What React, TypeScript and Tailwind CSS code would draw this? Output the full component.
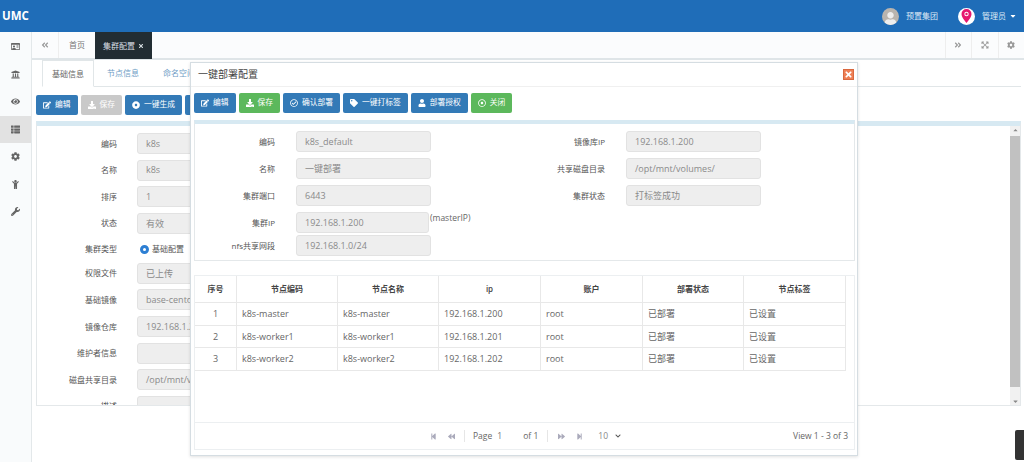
import { FaAngleDoubleLeft, FaAngleDoubleRight, FaBackward, FaCaretDown, FaCheckCircle, FaChevronDown, FaChild, FaCog, FaDotCircle, FaDownload, FaEdit, FaExpandArrowsAlt, FaEye, FaForward, FaRegCheckCircle, FaRegDotCircle, FaRegIdCard, FaStepBackward, FaStepForward, FaThList, FaTimes, FaUniversity, FaUser, FaWrench, FaTag } from 'react-icons/fa'

const font = 'font-["Open_Sans","Noto_Sans_CJK_SC",sans-serif]'

const sideIcons = [FaRegIdCard, FaUniversity, FaEye, FaThList, FaCog, FaChild, FaWrench]

const bgFields: [string, string][] = [
  ['编码', 'k8s'],
  ['名称', 'k8s'],
  ['排序', '1'],
  ['状态', '有效'],
]
const bgFields2: [string, string][] = [
  ['权限文件', '已上传'],
  ['基础镜像', 'base-centos'],
  ['镜像仓库', '192.168.1.200'],
  ['维护者信息', ''],
  ['磁盘共享目录', '/opt/mnt/volumes/'],
  ['描述', ''],
]

const leftFields: [string, string][] = [
  ['编码', 'k8s_default'],
  ['名称', '一键部署'],
  ['集群端口', '6443'],
]
const rightFields: [string, string][] = [
  ['镜像库IP', '192.168.1.200'],
  ['共享磁盘目录', '/opt/mnt/volumes/'],
  ['集群状态', '打标签成功'],
]

const cols = ['序号', '节点编码', '节点名称', 'ip', '账户', '部署状态', '节点标签']
const rows = [
  ['1', 'k8s-master', 'k8s-master', '192.168.1.200', 'root', '已部署', '已设置'],
  ['2', 'k8s-worker1', 'k8s-worker1', '192.168.1.201', 'root', '已部署', '已设置'],
  ['3', 'k8s-worker2', 'k8s-worker2', '192.168.1.202', 'root', '已部署', '已设置'],
]
const colWidths = ['w-[42px]', 'w-[101px]', 'w-[101px]', 'w-[102px]', 'w-[102px]', 'w-[101px]', 'w-[102px]']

function Btn({ icon: Icon, label, color = 'bg-[#337ab7]' }: { icon: any; label: string; color?: string }) {
  return (
    <div className={`${color} h-[20px] px-[7px] rounded-[2px] flex items-center gap-[4px] text-white text-[7.75px] shrink-0`}>
      <Icon className="text-[8px]" />
      <span>{label}</span>
    </div>
  )
}

function Input({ value, w = 'w-[135px]' }: { value: string; w?: string }) {
  return (
    <div className={`${w} h-[21px] bg-[#eeeeee] border border-[#e2e2e2] rounded-[3px] px-[8px] flex items-center text-[9px] text-[#8a8a8a] shrink-0`}>
      {value}
    </div>
  )
}

function BgRow({ label, value }: { label: string; value: string }) {
  return (
    <div className="flex items-center h-[21px] mb-[5.6px] shrink-0">
      <div className="w-[80px] text-right text-[8px] text-[#555]">{label}</div>
      <div className="ml-[20px]"><Input value={value} w="w-[300px]" /></div>
    </div>
  )
}

function ModalField({ label, value, w, labelW = 'w-[80px]' }: { label: string; value: string; w?: string; labelW?: string }) {
  return (
    <div className="flex items-center h-[21px]">
      <div className={`${labelW} text-right text-[8px] text-[#555] shrink-0`}>{label}</div>
      <div className="ml-[21px]"><Input value={value} w={w} /></div>
    </div>
  )
}

function Modal() {
  return (
    <div className="absolute left-[190px] top-[62px] w-[668px] h-[394px] bg-white border border-[#d5dde2] shadow-[0_1px_3px_rgba(0,0,0,0.12)] flex flex-col">
      <div className="h-[24px] flex items-center justify-between pl-[7px] pr-[3px] border-b border-[#f0f0f0] shrink-0">
        <span className="text-[10px] text-[#444]">一键部署配置</span>
        <div className="w-[11px] h-[11px] bg-[#ee7f55] border border-[#d9683f] flex items-center justify-center">
          <FaTimes className="text-white text-[9px]" />
        </div>
      </div>
      <div className="flex gap-[3px] pl-[3px] pt-[6px] shrink-0">
        <Btn icon={FaEdit} label="编辑" />
        <Btn icon={FaDownload} label="保存" color="bg-[#5cb85c]" />
        <Btn icon={FaRegCheckCircle} label="确认部署" />
        <Btn icon={FaTag} label="一键打标签" />
        <Btn icon={FaUser} label="部署授权" />
        <Btn icon={FaRegDotCircle} label="关闭" color="bg-[#5cb85c]" />
      </div>
      <div className="ml-[3px] mr-[2px] mt-[7px] h-[141px] border border-[#e4e8ea] border-t-[4px] border-t-[#d7e9f2] flex pt-[7px] shrink-0">
        <div className="w-[236px] flex flex-col shrink-0">
          <div className="flex flex-col gap-[6px]">
            {leftFields.map(([l, v]) => <ModalField key={l} label={l} value={v} />)}
            <div className="flex items-start h-[21px] whitespace-nowrap">
              <ModalField label="集群IP" value="192.168.1.200" w="w-[133px]" />
              <span className="text-[8.5px] text-[#666] ml-[1px]">(masterIP)</span>
            </div>
          </div>
          <div className="mt-[2px]">
            <ModalField label="nfs共享网段" value="192.168.1.0/24" />
          </div>
        </div>
        <div className="flex flex-col gap-[6px] ml-[74px]">
          {rightFields.map(([l, v]) => <ModalField key={l} label={l} value={v} labelW="w-[100px]" />)}
        </div>
      </div>
      <div className="ml-[3px] mr-[2px] mt-[14px] flex-1 border border-[#eceff1] mb-[5px] flex flex-col">
        <div className="w-[651px]">
          <div className="flex h-[27px] border-b border-[#e8e8e8]">
            {cols.map((c, i) => (
              <div key={c} className={`${colWidths[i]} border-r border-[#e8e8e8] flex items-center justify-center text-[8px] font-semibold text-[#444]`}>{c}</div>
            ))}
          </div>
          {rows.map(r => (
            <div key={r[0]} className="flex h-[22.5px] border-b border-[#e8e8e8]">
              {r.map((c, i) => (
                <div key={i} className={`${colWidths[i]} ${i === 0 ? 'justify-center' : 'pl-[5px]'} border-r border-[#e8e8e8] flex items-center text-[9px] text-[#666]`}>{c}</div>
              ))}
            </div>
          ))}
        </div>
        <div className="flex-1" />
        <div className="h-[27px] border-t border-[#eceff1] flex items-center relative text-[#888] text-[8.5px]">
          <div className="ml-[235px] flex items-center">
            <FaStepBackward className="text-[7px] text-[#aab]" />
            <FaBackward className="text-[7px] text-[#aab] ml-[11px]" />
            <span className="w-px h-[12px] bg-[#e6e6e6] ml-[9px]" />
            <span className="ml-[8px] text-[#666]">Page</span>
            <span className="ml-[5px] w-[24px] text-[#777]">1</span>
            <span className="ml-[2px] text-[#666]">of 1</span>
            <span className="w-px h-[12px] bg-[#e6e6e6] ml-[9px]" />
            <FaForward className="text-[7px] text-[#aab] ml-[10px]" />
            <FaStepForward className="text-[7px] text-[#aab] ml-[11px]" />
            <span className="ml-[15px]">10</span>
            <FaChevronDown className="text-[6px] ml-[7px] text-[#555]" />
          </div>
          <span className="absolute right-[6px] text-[#666]">View 1 - 3 of 3</span>
        </div>
      </div>
    </div>
  )
}

export default function App() {
  return (
    <div className={`${font} relative w-[1024px] h-[462px] overflow-hidden bg-white flex flex-col`}>
      <header className="h-[32px] bg-[#1f6db8] flex items-center justify-between text-white shrink-0">
        <span className="ml-[2px] text-[11.5px] font-bold">UMC</span>
        <div className="flex items-center mr-[7px]">
          <div className="w-[17px] h-[17px] rounded-full bg-[#b9b4ae] flex items-end justify-center overflow-hidden">
            <FaUser className="text-[13px] text-[#eeeeee]" />
          </div>
          <span className="ml-[7px] text-[8px] text-[#dce9f5]">预置集团</span>
          <div className="ml-[20px] w-[17px] h-[17px] rounded-full bg-white flex items-center justify-center">
            <svg width="11" height="14" viewBox="0 0 11 14">
              <path d="M5.5 0a5 5 0 0 0-5 5c0 3.5 5 9 5 9s5-5.500 5-9a5 5 0 0 0-5-5z" fill="#e6176f" />
              <circle cx="5.500" cy="5" r="2.200" fill="#fff" />
              <circle cx="5.500" cy="5" r="1.200" fill="#e6176f" />
            </svg>
          </div>
          <span className="ml-[7px] text-[8px] text-[#dce9f5]">管理员</span>
          <FaCaretDown className="ml-[3px] text-[8px]" />
        </div>
      </header>

      <div className="flex flex-1 min-h-0">
        <aside className="w-[32px] bg-[#f9fbfc] border-r border-[#e3e8ea] flex flex-col pt-[1px] shrink-0">
          {sideIcons.map((Icon, i) => (
            <div key={i} className={`h-[27.500px] flex items-center justify-center ${i === 3 ? 'bg-[#e2e2e2]' : ''}`}>
              <Icon className="text-[9px] text-[#666]" />
            </div>
          ))}
        </aside>

        <main className="flex-1 min-w-0 flex flex-col">
          <div className="h-[28px] bg-[#fbfcfd] border-b-2 border-[#dfe5e8] flex items-center text-[8px] text-[#777] shrink-0">
            <div className="w-[27px] h-full border-r border-[#eeeeee] flex items-center justify-center">
              <FaAngleDoubleLeft className="text-[8px] text-[#999]" />
            </div>
            <div className="w-[36px] h-full flex items-center justify-center">首页</div>
            <div className="w-[57px] h-[27px] self-start bg-[#222d33] flex items-center justify-center gap-[3px] text-[#d9dfe3]">
              <span>集群配置</span>
              <FaTimes className="text-[6px]" />
            </div>
            <div className="flex-1" />
            {[FaAngleDoubleRight, FaExpandArrowsAlt, FaCog].map((Icon, i) => (
              <div key={i} className="w-[26.500px] h-full border-l border-[#eeeeee] flex items-center justify-center">
                <Icon className="text-[8px] text-[#999]" />
              </div>
            ))}
          </div>

          <div className="h-[27px] ml-[10px] mr-[3px] border-b border-[#e1e6e8] flex text-[8px] shrink-0">
            <div className="w-[52px] h-[27px] bg-white border border-[#e1e6e8] border-b-white flex items-center justify-center text-[#666]">基础信息</div>
            <div className="w-[58px] flex items-center justify-center text-[#6e9cc5]">节点信息</div>
            <div className="w-[54px] flex items-center justify-center text-[#6e9cc5]">命名空间</div>
          </div>

          <div className="flex gap-[3px] ml-[4px] mt-[8px] shrink-0">
            <Btn icon={FaEdit} label="编辑" />
            <Btn icon={FaDownload} label="保存" color="bg-[#c9c9c9]" />
            <Btn icon={FaDotCircle} label="一键生成" />
            <Btn icon={FaCheckCircle} label="确认" />
          </div>

          <div className="ml-[4px] mr-[3px] mt-[6px] h-[285px] border border-[#e4e8ea] border-t-[5px] border-t-[#d7e9f2] flex overflow-hidden shrink-0">
            <div className="flex-1 pt-[7px] flex flex-col overflow-hidden">
              {bgFields.map(([l, v]) => <BgRow key={l} label={l} value={v} />)}
              <div className="flex items-center h-[20px] mb-[3.5px] shrink-0">
                <div className="w-[80px] text-right text-[8px] text-[#555]">集群类型</div>
                <div className="ml-[23px] w-[9px] h-[9px] rounded-full border-[3px] border-[#2d7fd3] bg-white" />
                <span className="ml-[3px] text-[8px] text-[#555]">基础配置</span>
              </div>
              {bgFields2.map(([l, v]) => <BgRow key={l} label={l} value={v} />)}
            </div>
            <div className="w-[10px] bg-[#f1f1f1] flex flex-col items-center shrink-0">
              <FaCaretDown className="text-[7px] text-[#888] rotate-180 mt-[1px]" />
              <div className="w-full h-[252px] bg-[#c1c1c1] mt-[2px]" />
              <FaCaretDown className="text-[7px] text-[#888] mt-[11px]" />
            </div>
          </div>
        </main>
      </div>

      <Modal />
      <div className="absolute right-0 top-[430px] w-[9px] h-[30px] bg-[#333] rounded-l-[2px]" />
    </div>
  )
}
